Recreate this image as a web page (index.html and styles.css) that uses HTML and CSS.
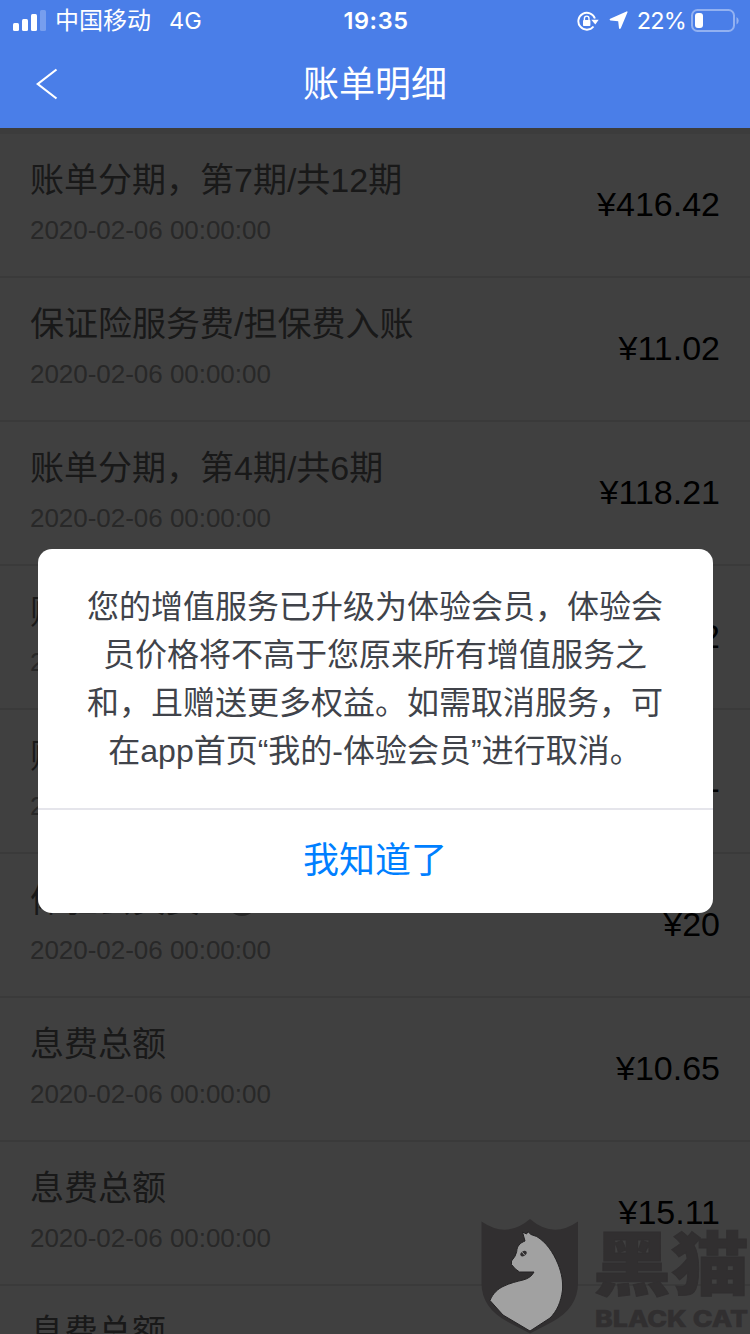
FILE: index.html
```html
<!DOCTYPE html>
<html lang="zh-CN">
<head>
<meta charset="utf-8">
<title>账单明细</title>
<link rel="stylesheet" href="styles.css">
</head>
<body>
<div class="screen">
  <header class="header">
    <div class="status">
      <div class="status-left">
        <svg class="signal" width="33" height="22" viewBox="0 0 33 22" fill="#fff">
          <rect x="0" y="13" width="6" height="8" rx="1.5"/>
          <rect x="9" y="9" width="6" height="12" rx="1.5"/>
          <rect x="18" y="4" width="6" height="17" rx="1.5"/>
          <rect x="27" y="0" width="6" height="21" rx="1.5" opacity=".25"/>
        </svg>
        <span class="carrier">中国移动</span>
        <span class="network">4G</span>
      </div>
      <div class="clock">19:35</div>
      <div class="status-right">
        <svg class="lock" width="22" height="20" viewBox="0 0 22 20" fill="none" stroke="#fff">
          <path d="M17.900 7.500A8.500 8.500 0 1 0 16.500 15.500" stroke-width="1.9"/>
          <path d="M14.300 8.700H21.700L18.300 13.500z" fill="#fff" stroke="none"/>
          <rect x="6" y="9" width="7.400" height="6" rx=".8" fill="#fff" stroke="none"/>
          <path d="M7.400 9.500V7.400a2.300 2.300 0 0 1 4.600 0v2.100" stroke-width="1.4"/>
        </svg>
        <svg class="arrow" width="19" height="19" viewBox="0 0 19 19" fill="#fff">
          <path d="M17.500.4Q18.800.2 18.500 1.300L11.800 17.300Q10.600 18.800 10 17.300L9.200 10.200 1.500 9.400Q-.2 8.700 1.200 7.700Z"/>
        </svg>
        <span class="percent">22%</span>
        <svg class="battery" width="48" height="24" viewBox="0 0 48 24">
          <rect x="1" y="1" width="42" height="21" rx="5.5" fill="none" stroke="#fff" stroke-opacity=".4" stroke-width="2"/>
          <rect x="4" y="4" width="8" height="15" rx="3" fill="#fff"/>
          <path d="M45.500 8q2.200 1.200 2.200 3.800t-2.200 3.800z" fill="#fff" opacity=".4"/>
        </svg>
      </div>
    </div>
    <div class="nav">
      <svg class="back" width="22" height="32" viewBox="0 0 22 32" fill="none" stroke="#fff" stroke-width="2.2"><path d="M20.500 1.500 1.800 16 20.500 30.500"/></svg>
      <h1 class="nav-title">账单明细</h1>
    </div>
  </header>

  <main class="content">
    <ul class="bills">
      <li class="bill"><div class="info"><div class="name">账单分期，第7期/共12期</div><div class="date">2020-02-06 00:00:00</div></div><div class="amount">¥416.42</div></li>
      <li class="bill"><div class="info"><div class="name">保证险服务费/担保费入账</div><div class="date">2020-02-06 00:00:00</div></div><div class="amount">¥11.02</div></li>
      <li class="bill"><div class="info"><div class="name">账单分期，第4期/共6期</div><div class="date">2020-02-06 00:00:00</div></div><div class="amount">¥118.21</div></li>
      <li class="bill"><div class="info"><div class="name">账单分期</div><div class="date">2020-02-06 00:00:00</div></div><div class="amount">¥2</div></li>
      <li class="bill"><div class="info"><div class="name">账单分期</div><div class="date">2020-02-06 00:00:00</div></div><div class="amount">¥1</div></li>
      <li class="bill"><div class="info"><div class="name">体验会员费<span class="hint"></span></div><div class="date">2020-02-06 00:00:00</div></div><div class="amount">¥20</div></li>
      <li class="bill"><div class="info"><div class="name">息费总额</div><div class="date">2020-02-06 00:00:00</div></div><div class="amount">¥10.65</div></li>
      <li class="bill"><div class="info"><div class="name">息费总额</div><div class="date">2020-02-06 00:00:00</div></div><div class="amount">¥15.11</div></li>
      <li class="bill"><div class="info"><div class="name">息费总额</div></div></li>
    </ul>
    <div class="overlay">
      <section class="dialog" role="dialog">
        <p class="message">您的增值服务已升级为体验会员，体验会<br>员价格将不高于您原来所有增值服务之<br>和，且赠送更多权益。如需取消服务，可<br>在app首页“我的-体验会员”进行取消。</p>
        <button class="confirm">我知道了</button>
      </section>
    </div>
  </main>

  <svg class="watermark" width="280" height="124" viewBox="0 0 280 124">
    <path fill="#312f30" d="M11.500 11.500Q37 29 60 9Q83 29 108 11.500V73Q108 98 82 112L60 123.500 38 112Q11.500 98 11.500 73Z"/>
    <path fill="#a1a1a1" stroke="#242324" stroke-width="1" d="M52.500 22 56.500 24 58 21.700 61 24.500 66.700 26.500C76 32 83 42 88 54C92 64 93 72 92.500 80C91 92 87 101 80 108L60 121 33 105 20 90.500C23 83 28 79 33 76.500C40 73 47 71.500 53 70Q61 68 64 62H49.500Q45 59.500 41.500 54.500V51Q46 46 46.700 41.500C47 36 50 33 55 31Z"/>
    <ellipse cx="53.500" cy="43.600" rx="3.500" ry="2.300" transform="rotate(-35 53.500 43.600)" fill="#312f30"/>
    <path stroke="#a1a1a1" stroke-width="1" d="M52.300 42.200 54.600 45"/>
    <text class="mark-cn" x="123" y="80" textLength="156" lengthAdjust="spacingAndGlyphs">黑猫</text>
    <text class="mark-en" x="125" y="116.500" textLength="153" lengthAdjust="spacingAndGlyphs">BLACK CAT</text>
  </svg>
</div>
</body>
</html>
```
FILE: styles.css
```css
* { box-sizing: border-box; }
body {
  margin: 0;
  font-family: "Liberation Sans", "Noto Sans CJK SC", sans-serif;
}
.screen {
  position: relative;
  display: flex;
  flex-direction: column;
  width: 750px;
  height: 1334px;
  overflow: hidden;
}
.header {
  height: 128px;
  flex: none;
  background: #4a7ee8;
  color: #fff;
}
.status {
  display: grid;
  grid-template-columns: 1fr auto 1fr;
  align-items: center;
  height: 40px;
  padding: 0 11px 0 13px;
  font: 24px/40px Inter, "Noto Sans CJK SC", sans-serif;
}
.status-left, .status-right { display: flex; align-items: center; white-space: nowrap; }
.status-right { justify-content: flex-end; }
.signal { margin-right: 9px; }
.carrier { margin-right: 18px; padding-top: 1px; }
.network { font-size: 23.500px; padding-top: 1px; }
.clock { padding-top: 1px; font-weight: 600; letter-spacing: .6px; font-size: 23.500px; }
.lock { margin-right: 10px; }
.arrow { margin-right: 9px; }
.percent { margin-right: 5px; padding-top: 1px; font-size: 23.500px; letter-spacing: -.8px; }
.battery { flex: none; }
.nav {
  display: grid;
  grid-template-columns: 60px 1fr 60px;
  align-items: center;
  height: 88px;
}
.back { margin-left: 36px; }
.nav-title {
  margin: 0;
  padding-top: 2px;
  text-align: center;
  font-size: 36px;
  font-weight: 400;
  line-height: 86px;
}
.content {
  position: relative;
  flex: 1;
  min-height: 0;
  padding-top: 6px;
  overflow: hidden;
  background: #f0f0f0;
}
.bills { margin: 0; padding: 0; list-style: none; }
.bill {
  display: flex;
  justify-content: space-between;
  align-items: center;
  height: 144px;
  padding: 0 30px;
  border-bottom: 2px solid #e5e5e5;
  background: #fff;
}
.info { align-self: flex-start; padding-top: 21px; }
.name {
  display: flex;
  align-items: center;
  height: 50px;
  font-size: 34px;
  line-height: 50px;
  color: #666;
  white-space: nowrap;
}
.hint {
  width: 32px;
  height: 32px;
  margin-left: 26px;
  border: 3px solid #999;
  border-radius: 50%;
}
.date { margin-top: 7px; font-size: 26px; line-height: 36px; letter-spacing: -.03px; color: #a0a0a0; }
.amount { padding-bottom: 2px; font-size: 34px; line-height: 50px; color: #000; }
.overlay {
  position: absolute;
  inset: 0;
  display: flex;
  justify-content: center;
  align-items: flex-start;
  padding-top: 421px;
  background: rgba(0, 0, 0, .75);
}
.dialog {
  width: 675px;
  height: 364px;
  border-radius: 14px;
  background: #fff;
  overflow: hidden;
}
.message {
  height: 261px;
  margin: 0;
  padding-top: 34px;
  border-bottom: 2px solid #e5e5eb;
  font-size: 32px;
  line-height: 48px;
  text-align: center;
  white-space: nowrap;
  color: #40434a;
}
.confirm {
  display: block;
  width: 100%;
  height: 103px;
  padding: 0 0 2px;
  border: 0;
  background: none;
  font: 36px/101px "Liberation Sans", "Noto Sans CJK SC", sans-serif;
  color: #007fff;
}
.watermark { position: absolute; right: 0; bottom: 0; fill: #312f30; }
.mark-cn { font: 900 69px "Noto Sans CJK SC", sans-serif; stroke: #312f30; stroke-width: 1px; }
.mark-en { font: 800 23px Inter, sans-serif; stroke: #312f30; stroke-width: .5px; }
```
